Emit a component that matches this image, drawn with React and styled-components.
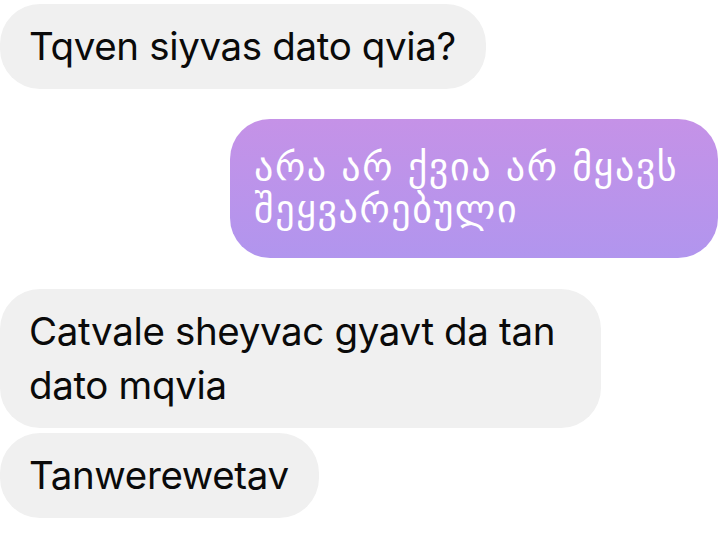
import React from 'react';
import styled, { createGlobalStyle } from "styled-components";

const GlobalStyle = createGlobalStyle`
  html, body {
    margin: 0;
    padding: 0;
    background: #ffffff;
  }
  body {
    width: 720px;
    height: 543px;
    overflow: hidden;
    font-family: Inter, "DejaVu Sans", sans-serif;
  }
`;

const messages = [
    { id: 1, mine: false, text: "Tqven siyvas dato qvia?", gap: 4 },
    { id: 2, mine: true, text: "არა არ ქვია არ მყავს შეყვარებული", gap: 30 },
    { id: 3, mine: false, text: "Catvale sheyvac gyavt da tan dato mqvia", gap: 31 },
    { id: 4, mine: false, text: "Tanwerewetav", gap: 5 },
];

export default function App(){
    return(
        <>
            <GlobalStyle/>
            <Thread>
                {messages.map((m) => (
                    <Row key={m.id} $mine={m.mine} $gap={m.gap}>
                        {m.mine
                            ? <MyBubble>{m.text}</MyBubble>
                            : <TheirBubble>{m.text}</TheirBubble>}
                    </Row>
                ))}
            </Thread>
        </>
    )
}

const Thread = styled.div`
  display: flex;
  flex-direction: column;
  width: 720px;
`;

const Row = styled.div`
  display: flex;
  justify-content: ${props => props.$mine ? 'flex-end' : 'flex-start'};
  margin-top: ${props => props.$gap}px;
  padding-right: ${props => props.$mine ? 2 : 0}px;
`;

const Bubble = styled.div`
  box-sizing: border-box;
  border-radius: 40px;
`;

const TheirBubble = styled(Bubble)`
  max-width: 601px;
  padding: 15px 30px 16px 29px;
  font-family: Inter, "Liberation Sans", sans-serif;
  font-size: 38.5px;
  line-height: 54px;
  letter-spacing: -0.35px;
  color: #0a0a0a;
  background: #f0f0f0;
`;

const MyBubble = styled(Bubble)`
  max-width: 488px;
  padding: 27px 20px 28px 24px;
  font-family: "DejaVu Sans", sans-serif;
  font-size: 38px;
  line-height: 42px;
  letter-spacing: 1.6px;
  color: #ffffff;
  background: linear-gradient(180deg, #c592e7 0%, #b195ee 100%);
`;
